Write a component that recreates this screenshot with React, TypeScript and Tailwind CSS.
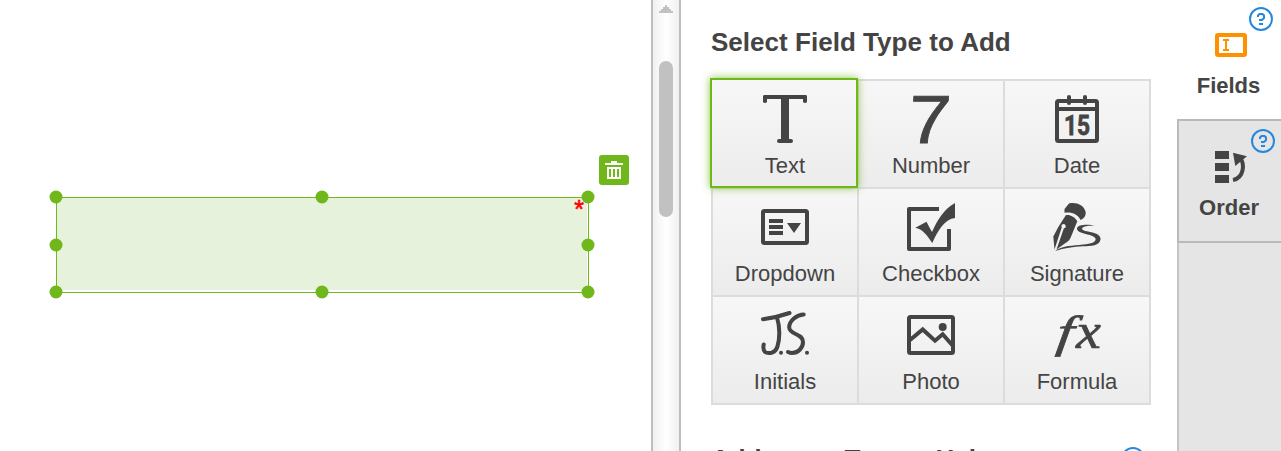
import { useState } from 'react'
import type { ReactNode } from 'react'
import clsx from 'clsx'

const TextIcon = () => (
  <>
    <rect x="2" y="3" width="44" height="4" rx="2" />
    <rect x="2" y="3" width="4" height="8" rx="1.8" />
    <rect x="42" y="3" width="4" height="8" rx="1.8" />
    <rect x="20" y="5" width="8" height="44" />
    <rect x="16" y="47" width="16" height="4" rx="2" />
  </>
)

const NumberIcon = () => (
  <text
    transform="translate(-0.2 50.5) skewX(-4) scale(1.12 1)"
    fontSize="68"
    fontFamily="Liberation Sans, Arial, sans-serif"
    stroke="currentColor"
    strokeWidth="0.8">
    7
  </text>
)

const DateIcon = () => (
  <>
    <rect x="4" y="9" width="40" height="40" rx="1.5" fill="none" stroke="currentColor" strokeWidth="4" />
    <rect x="4" y="15" width="40" height="4" />
    <rect x="14" y="3" width="4" height="10" rx="2" />
    <rect x="30" y="3" width="4" height="10" rx="2" />
    <text
      x="11"
      y="42.6"
      fontSize="27"
      fontWeight="700"
      textLength="26"
      lengthAdjust="spacingAndGlyphs"
      fontFamily="Roboto, Arial, sans-serif"
      stroke="currentColor"
      strokeWidth="0.8">
      15
    </text>
  </>
)

const DropdownIcon = () => (
  <>
    <rect x="2" y="11" width="44" height="32" rx="1.5" fill="none" stroke="currentColor" strokeWidth="4" />
    <path d="M8 19h14v4H8zM8 25h14v4H8zM8 31h14v4H8zM26 23h14l-7 10z" />
  </>
)

const CheckboxIcon = () => (
  <>
    <path
      d="M32 9H2v40h40V29"
      fill="none"
      stroke="currentColor"
      strokeWidth="4"
      strokeLinejoin="round"
    />
    <path d="M8.3 27.7 19.5 21.7C21 25 23 28.5 25 32C31 19 37 9 48 3V18C38 19 31 30 25.3 43C20 35 15.5 29 8.3 27.7z" />
  </>
)

const SignatureIcon = () => (
  <>
    <path d="M16 3.5L11.5 9V12.8C18 11.5 25 14 27.5 20C31.5 18.5 33.3 15 32.5 11.5C30.5 5 23.5 2 16 3.5z" />
    <path d="M12.8 15.2C16 14.2 22 16.5 24.3 21.3L18.5 35.5C17 39.5 15.5 41.5 12.5 43L3.5 49.5L10.9 28.3A2.1 2.1 0 1 0 8.8 27.3L1.5 49.5L.3 36.5L5.3 27z" />
    <path d="M2 51C10 45 20 46 30 44.5C38 44 43.5 42 42.5 38.5C41 34 24 34 24 28.7C24.5 24 36 24.5 42 25.6C36 25.8 29 26 29 29C30 32.5 47.5 31 47.6 39C47 46 38 46 30 46.3C20 46.7 12 48 2 51z" />
  </>
)

const InitialsIcon = () => (
  <g fill="none" stroke="currentColor" strokeWidth="4" strokeLinecap="round" strokeLinejoin="round">
    <path d="M2 11.2C12 10 20 8 28.5 5" />
    <path d="M16 9.5C19 19 19 31 16.3 39C14.5 44.5 9 46 5 44.5C2 43 2 40 2.7 36.5" />
    <path d="M42.7 6.5C36 6.5 28 13 28.2 19.5C28.5 27 42 25 42 34C42 40 37 45 31 45C29 45 28 44.5 27 44" />
    <path d="M20 44.7h.01M46 44.7h.01" />
  </g>
)

const PhotoIcon = () => (
  <>
    <rect x="2" y="9" width="44" height="36" rx="1.5" fill="none" stroke="currentColor" strokeWidth="4" />
    <circle cx="35.7" cy="19" r="4" />
    <path d="M3 32L15.7 21.5L28 32.7L35.7 26.3L46 38" fill="none" stroke="currentColor" strokeWidth="4" />
  </>
)

const FormulaIcon = () => (
  <g
    fontStyle="italic"
    fontFamily="Liberation Serif, Times New Roman, serif"
    stroke="currentColor"
    strokeWidth="0.7">
    <text transform="translate(2.5 39) skewX(-7) scale(1.35 1)" fontSize="45">
      f
    </text>
    <text transform="translate(23 39.7) scale(1.12 1)" fontSize="50">
      x
    </text>
  </g>
)

const fieldTypes: { label: string; icon: ReactNode }[] = [
  { label: 'Text', icon: <TextIcon /> },
  { label: 'Number', icon: <NumberIcon /> },
  { label: 'Date', icon: <DateIcon /> },
  { label: 'Dropdown', icon: <DropdownIcon /> },
  { label: 'Checkbox', icon: <CheckboxIcon /> },
  { label: 'Signature', icon: <SignatureIcon /> },
  { label: 'Initials', icon: <InitialsIcon /> },
  { label: 'Photo', icon: <PhotoIcon /> },
  { label: 'Formula', icon: <FormulaIcon /> },
]

const HelpIcon = ({ className }: { className?: string }) => (
  <svg viewBox="0 0 24 24" className={clsx('h-6 w-6 text-[#2688dd]', className)} fill="none" stroke="currentColor" strokeWidth="2">
    <circle cx="12" cy="12" r="11" />
    <path d="M9 10V8.5L10.5 7H13.5L15 8.5V11L13 13H10M10 17H14" />
  </svg>
)

const handles = [
  'left-0 top-0',
  'left-1/2 top-0',
  'left-full top-0',
  'left-0 top-1/2',
  'left-full top-1/2',
  'left-0 top-full',
  'left-1/2 top-full',
  'left-full top-full',
]

const FieldCanvas = () => (
  <main className="relative w-[651px] shrink-0 bg-white">
    {/* Selected field */}
    <div className="absolute top-[197px] left-[56px] h-24 w-[533px] border border-[#70b71b]">
      <div className="h-[92px] w-[530px] bg-[#e6f2dc]" />
      <span className="absolute top-[-1px] right-[4px] text-[25px] leading-none text-[#ff0000] [-webkit-text-stroke:0.6px_#ff0000]">
        *
      </span>
      <div className="absolute -top-px right-0 bottom-0 -left-px">
        {handles.map((position) => (
          <span
            key={position}
            className={clsx('absolute h-[13px] w-[13px] -translate-x-1/2 -translate-y-1/2 rounded-full bg-[#70b71b]', position)}
          />
        ))}
      </div>
    </div>
    <button className="absolute top-[155px] left-[599px] h-[30px] w-[30px] rounded-[3px] bg-[#70b71b]" aria-label="Delete">
      <svg viewBox="0 0 30 30" className="h-[30px] w-[30px]" fill="#fff">
        <path d="M12 6h6v2h6v2H6V8h6z" />
        <path fillRule="evenodd" d="M8 12h14v12H8zM10 14v8h2v-8zM14 14v8h2v-8zM18 14v8h2v-8z" />
      </svg>
    </button>
  </main>
)

const ScrollBar = () => (
  <div className="flex w-[30px] shrink-0 flex-col items-center border-x-2 border-[#bebebe] bg-linear-to-r from-[#f0f0f0] via-white via-50% to-[#f0f0f0]">
    <svg viewBox="0 0 14 8" className="mt-[5px] h-2 w-3.5 shrink-0" fill="#c1c1c1">
      <path d="M6 0h2v2h2v2h2v2h2v2H0V6h2V4h2V2h2z" />
    </svg>
    <div className="mt-12 h-[156px] w-3.5 shrink-0 rounded-full bg-[#c1c1c1]" />
  </div>
)

export default function App() {
  const [selected, setSelected] = useState('Text')

  return (
    <div className="flex h-[451px] w-[1281px] overflow-hidden bg-white font-['Liberation_Sans',Arial,sans-serif] text-[#444]">
      <FieldCanvas />
      <ScrollBar />

      {/* Field types */}
      <section className="w-[496px] shrink-0 pt-[27px] pl-[30px]">
        <h2 className="text-[26px] leading-[30px] font-bold tracking-[0.03px] whitespace-nowrap">Select Field Type to Add</h2>
        <div className="mt-[22px] grid w-[440px] grid-cols-3 gap-0.5 border-2 border-[#dcdcdc] bg-[#dcdcdc]">
          {fieldTypes.map((type) => (
            <button
              key={type.label}
              onClick={() => setSelected(type.label)}
              className={clsx(
                'flex flex-col items-center bg-linear-to-b from-[#f7f7f7] to-[#ececec]',
                selected === type.label
                  ? 'relative -mt-[3px] -mr-px -mb-px -ml-[3px] h-[110px] border-2 border-[#70b71b] pt-3 pl-0.5 shadow-[0_0_8px_rgba(112,183,27,0.8)]'
                  : 'h-[106px] pt-[11px]',
              )}>
              <svg viewBox="0 0 48 52" className="h-[52px] w-12 shrink-0 overflow-visible" fill="currentColor">
                {type.icon}
              </svg>
              <span className="mt-[9px] text-[22px] leading-[26px]">{type.label}</span>
            </button>
          ))}
        </div>
        <div className="mt-[39px] flex w-[434px] items-start justify-between">
          <h2 className="text-[26px] leading-[30px] font-bold tracking-[0.06px] whitespace-nowrap">Add some Text to Help</h2>
          <HelpIcon className="mt-[3px]" />
        </div>
      </section>

      {/* Side tabs */}
      <nav className="flex w-[104px] shrink-0 flex-col">
        <button className="relative flex h-[119px] shrink-0 flex-col items-center pt-[33px]">
          <svg viewBox="0 0 32 24" className="ml-1 h-6 w-8" fill="none" stroke="#ff9100">
            <rect x="2" y="2" width="28" height="20" rx="1" strokeWidth="4" />
            <path d="M8 7h6M8 17h6M11 7v10" strokeWidth="2" />
          </svg>
          <span className="mt-4 mr-px text-[22px] leading-[26px] font-bold">Fields</span>
          <HelpIcon className="absolute top-[7px] right-2" />
        </button>
        <button className="relative flex h-[124px] shrink-0 flex-col items-center border-y-2 border-l-2 border-[#b9b9b9] bg-[#e5e5e5] pt-[30px]">
          <svg viewBox="0 0 32 32" className="ml-0.5 h-8 w-8" fill="currentColor">
            <path d="M0 0h14v8H0zM0 12h14v8H0zM0 24h14v8H0z" />
            <path d="M18 1.7L32 5.2L20.3 15z" />
            <path d="M25 7C30 13 29 27 18 29" fill="none" stroke="currentColor" strokeWidth="4" />
          </svg>
          <span className="mt-3 mr-0.5 text-[22px] leading-[26px] font-bold">Order</span>
          <HelpIcon className="absolute top-2 right-1.5" />
        </button>
        <div className="flex-1 border-l-2 border-[#c4c4c4] bg-[#e5e5e5]" />
      </nav>
    </div>
  )
}
